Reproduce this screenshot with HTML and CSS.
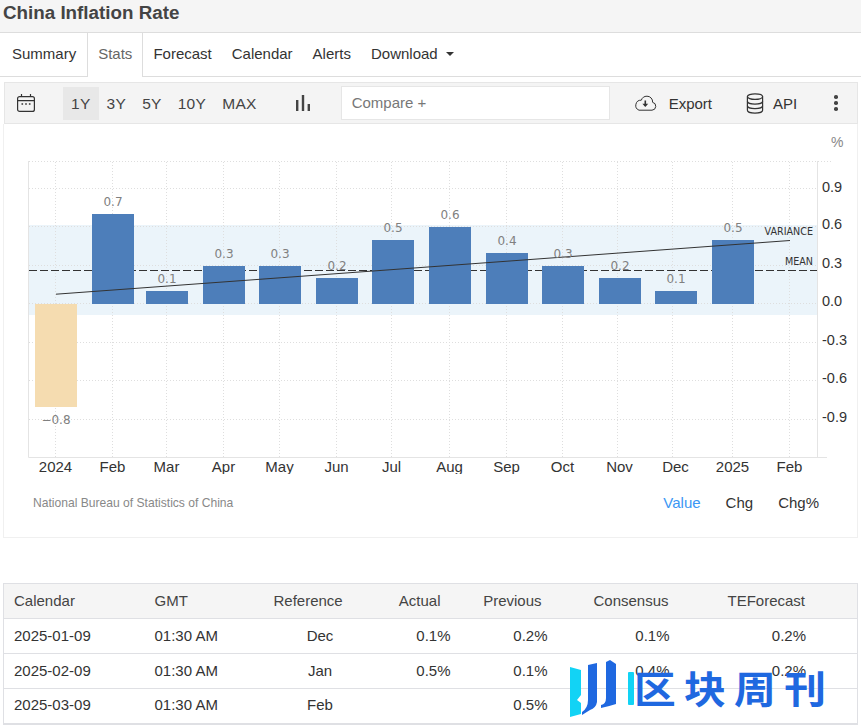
FILE: index.html
```html
<!DOCTYPE html>
<html lang="en">

<head>
    <meta charset="UTF-8">
    <meta name="viewport" content="width=device-width, initial-scale=1.0">
    <title>China Inflation Rate</title>
    <link rel="stylesheet" href="styles.css">
</head>

<body>

    <h1 class="page-title">China Inflation Rate</h1>

    <ul class="tabs">
        <li>Summary</li>
        <li class="active">Stats</li>
        <li>Forecast</li>
        <li>Calendar</li>
        <li>Alerts</li>
        <li>Download <span class="caret"></span></li>
    </ul>

    <div class="toolbar">
        <svg class="icon-calendar" width="20" height="20" viewBox="0 0 20 20" fill="none" stroke="#333" stroke-width="1.2">
            <rect x="1.6" y="3.6" width="16.8" height="14.8" rx="2" />
            <path d="M1.6 7.6h16.8M5.5 1v2.6M14.5 1v2.6" />
            <path d="M5.5 11h1.6M9.2 11h1.6M12.9 11h1.6" stroke-width="1.6" />
        </svg>
        <div class="ranges">
            <span class="range selected">1Y</span>
            <span class="range">3Y</span>
            <span class="range">5Y</span>
            <span class="range">10Y</span>
            <span class="range">MAX</span>
        </div>
        <svg class="icon-bars" width="16" height="16" viewBox="0 0 16 16" fill="#444">
            <rect x="1" y="5" width="2.4" height="11" />
            <rect x="6.8" y="0" width="2.4" height="16" />
            <rect x="12.6" y="9" width="2.4" height="7" />
        </svg>
        <div class="compare">Compare +</div>
        <svg class="icon-export" width="24" height="16" viewBox="0 0 24 16" fill="none" stroke="#333" stroke-width="1">
            <path d="M6 15.2H19a4 4 0 0 0 .6-7.9A5.6 5.6 0 0 0 14 1.2a6 6 0 0 0-5.7 4A5.2 5.2 0 0 0 6 15.2z" />
            <path d="M12.3 5.5v5.5" stroke-width="1.6" />
            <path d="M9.4 8.8h5.8l-2.9 3.2z" fill="#333" stroke="none" />
        </svg>
        <span class="tool-label export-label">Export</span>
        <svg class="icon-db" width="18" height="21" viewBox="0 0 18 21" fill="none" stroke="#333" stroke-width="1.2">
            <ellipse cx="9" cy="3.6" rx="7.6" ry="2.8" />
            <path d="M1.4 3.6v13.6c0 1.6 3.4 2.9 7.6 2.9s7.6-1.3 7.6-2.9V3.6" />
            <path d="M1.4 8.2c0 1.6 3.4 2.9 7.6 2.9s7.6-1.3 7.6-2.9M1.4 12.7c0 1.6 3.4 2.9 7.6 2.9s7.6-1.3 7.6-2.9" />
        </svg>
        <span class="tool-label">API</span>
        <div class="dots"><i></i><i></i><i></i></div>
    </div>

    <div class="chart-panel">
        <!-- viewBox is in page coordinates, the plot is a free canvas -->
        <svg class="chart" width="853" height="350" viewBox="4 124 853 350">
            <rect x="29" y="225" width="788" height="90" fill="#ebf4fa" />

            <g class="grid">
                <path d="M29 161.5H832M29 188.5H817M29 226.5H817M29 265.5H817M29 303.5H817M29 342.5H817M29 380.5H817M29 419.5H817" />
                <path d="M55.5 162V457M112.5 162V457M166.5 162V457M223.5 162V457M279.5 162V457M336.5 162V457M391.5 162V457M449.5 162V457M506.5 162V457M562.5 162V457M617.5 162V457M672.5 162V457M732.5 162V457M789.5 162V457" />
            </g>

            <path class="axis" d="M28.5 161V457.5H827M817.5 161V457.5" />

            <path class="mean" d="M29 270.5H817" />

            <rect class="bar-neg" x="35" y="304" width="42" height="103" />
            <rect class="bar" x="92" y="214" width="42" height="90" />
            <rect class="bar" x="146" y="291" width="42" height="13" />
            <rect class="bar" x="203" y="266" width="42" height="38" />
            <rect class="bar" x="259" y="266" width="42" height="38" />
            <rect class="bar" x="316" y="278" width="42" height="26" />
            <rect class="bar" x="372" y="240" width="42" height="64" />
            <rect class="bar" x="429" y="227" width="42" height="77" />
            <rect class="bar" x="486" y="253" width="42" height="51" />
            <rect class="bar" x="542" y="266" width="42" height="38" />
            <rect class="bar" x="599" y="278" width="42" height="26" />
            <rect class="bar" x="655" y="291" width="42" height="13" />
            <rect class="bar" x="712" y="240" width="42" height="64" />

            <path class="trend" d="M56 294.2L790 240.5" />

            <g class="bar-label">
                <text x="56" y="424">−0.8</text>
                <text x="113" y="206">0.7</text>
                <text x="167" y="283">0.1</text>
                <text x="224" y="258">0.3</text>
                <text x="280" y="258">0.3</text>
                <text x="337" y="270">0.2</text>
                <text x="393" y="232">0.5</text>
                <text x="450" y="219">0.6</text>
                <text x="507" y="245">0.4</text>
                <text x="563" y="258">0.3</text>
                <text x="620" y="270">0.2</text>
                <text x="676" y="283">0.1</text>
                <text x="733" y="232">0.5</text>
            </g>

            <g class="line-label">
                <text x="813" y="235">VARIANCE</text>
                <text x="813" y="265">MEAN</text>
            </g>

            <g class="y-label">
                <text x="822" y="192">0.9</text>
                <text x="822" y="229">0.6</text>
                <text x="822" y="268">0.3</text>
                <text x="822" y="306">0.0</text>
                <text x="822" y="345">-0.3</text>
                <text x="822" y="383">-0.6</text>
                <text x="822" y="422">-0.9</text>
            </g>
            <text class="unit" x="831" y="147">%</text>

            <g class="x-label">
                <text x="55.5" y="472">2024</text>
                <text x="112.5" y="472">Feb</text>
                <text x="166.5" y="472">Mar</text>
                <text x="223.5" y="472">Apr</text>
                <text x="279.5" y="472">May</text>
                <text x="336.5" y="472">Jun</text>
                <text x="391.5" y="472">Jul</text>
                <text x="449.5" y="472">Aug</text>
                <text x="506.5" y="472">Sep</text>
                <text x="562.5" y="472">Oct</text>
                <text x="619.5" y="472">Nov</text>
                <text x="675.5" y="472">Dec</text>
                <text x="732.5" y="472">2025</text>
                <text x="789.5" y="472">Feb</text>
            </g>
        </svg>
        <div class="chart-footer">
            <span class="source">National Bureau of Statistics of China</span>
            <div class="modes">
                <span class="mode current">Value</span>
                <span class="mode">Chg</span>
                <span class="mode">Chg%</span>
            </div>
        </div>
    </div>

    <table class="calendar">
        <thead>
            <tr>
                <th>Calendar</th>
                <th>GMT</th>
                <th>Reference</th>
                <th>Actual</th>
                <th>Previous</th>
                <th>Consensus</th>
                <th>TEForecast</th>
            </tr>
        </thead>
        <tbody>
            <tr>
                <td>2025-01-09</td>
                <td>01:30 AM</td>
                <td>Dec</td>
                <td>0.1%</td>
                <td>0.2%</td>
                <td>0.1%</td>
                <td>0.2%</td>
            </tr>
            <tr>
                <td>2025-02-09</td>
                <td>01:30 AM</td>
                <td>Jan</td>
                <td>0.5%</td>
                <td>0.1%</td>
                <td>0.4%</td>
                <td>0.2%</td>
            </tr>
            <tr>
                <td>2025-03-09</td>
                <td>01:30 AM</td>
                <td>Feb</td>
                <td></td>
                <td>0.5%</td>
                <td></td>
                <td></td>
            </tr>
        </tbody>
    </table>

    <div class="watermark">
        <svg class="watermark-logo" width="66" height="60" viewBox="0 0 66 60">
            <path fill="#12d3f5" d="M0 7L11 10V35L7 40L11 43V54L0 57Z" />
            <path fill="#1f68e0" d="M18 5L27 3V42Q26 48 20 50L12 55V52Q18 48 18 40Z" />
            <path fill="#1f68e0" d="M36 2L40 0L46 4V44Q40 46 31 48V45Q36 44 36 38Z" />
            <rect fill="#12d3f5" x="58" y="12" width="6" height="33" rx="1" />
        </svg>
        <span class="watermark-text">区块周刊</span>
    </div>

</body>

</html>
```

FILE: styles.css
```css
* {
    box-sizing: border-box;
}

body {
    position: relative;
    margin: 0;
    height: 726px;
    overflow: hidden;
    background: #ffffff;
    color: #333333;
    font-family: "Liberation Sans", Arial, sans-serif;
    font-size: 15px;
}

.page-title {
    margin: 0;
    height: 33px;
    padding: 2px 0 0 3px;
    background-color: #f5f5f5;
    border-bottom: 1px solid #dddddd;
    color: #444444;
    font-size: 18.8px;
    line-height: 21px;
}

.tabs {
    display: flex;
    margin: 0;
    padding: 0 0 0 2px;
    height: 44px;
    list-style: none;
    border-bottom: 1px solid #dddddd;
}

.tabs li {
    padding: 0 10px;
    line-height: 42px;
    height: 44px;
}

.tabs li:first-child {
    padding-right: 11px;
}

.tabs li.active {
    color: #666666;
    background-color: #ffffff;
    border-left: 1px solid #dddddd;
    border-right: 1px solid #dddddd;
}

.caret {
    display: inline-block;
    margin-left: 4px;
    vertical-align: 3px;
    border-top: 4px solid #333333;
    border-left: 4px solid transparent;
    border-right: 4px solid transparent;
}

.toolbar {
    display: flex;
    align-items: center;
    margin: 5px 3px 0 4px;
    height: 42px;
    background-color: #f4f4f4;
    border: 1px solid #e6e6e6;
}

.icon-calendar {
    margin-left: 11px;
}

.ranges {
    display: flex;
    margin-left: 27px;
}

.range {
    padding: 0 8px;
    height: 33px;
    line-height: 33px;
    font-size: 15.5px;
    letter-spacing: 0.3px;
    color: #444444;
}

.range.selected {
    background-color: #e8e8e8;
}

.icon-bars {
    margin-left: 30px;
}

.compare {
    margin-left: 30px;
    width: 269px;
    height: 34px;
    padding-left: 10px;
    line-height: 32px;
    color: #777777;
    background-color: #ffffff;
    border: 1px solid #e6e6e6;
}

.icon-export {
    margin-left: 23px;
}

.tool-label {
    margin-left: 9px;
}

.export-label {
    margin-left: 12px;
    margin-right: 34px;
}

.dots {
    display: flex;
    flex-direction: column;
    gap: 2.5px;
    margin-left: 37px;
}

.dots i {
    display: block;
    width: 3.5px;
    height: 3.5px;
    border-radius: 50%;
    background-color: #444444;
}

.chart-panel {
    margin-left: 3px;
    margin-right: 3px;
    height: 414px;
    border: 1px solid #f0f0f0;
    border-top: 0;
}

.chart {
    display: block;
}

.grid path {
    fill: none;
    stroke: #dedede;
    stroke-width: 1;
    stroke-dasharray: 1 2;
}

.axis {
    fill: none;
    stroke: #e4e4e4;
    stroke-width: 1;
}

.mean {
    fill: none;
    stroke: #333333;
    stroke-width: 1;
    stroke-dasharray: 8 3;
}

.bar {
    fill: #4d7eba;
}

.bar-neg {
    fill: #f5dcb0;
}

.trend {
    fill: none;
    stroke: #333333;
    stroke-width: 1;
}

.bar-label text {
    fill: #808080;
    font-family: "DejaVu Sans", sans-serif;
    font-size: 12px;
    text-anchor: middle;
}

.line-label text {
    fill: #333333;
    font-family: "DejaVu Sans", sans-serif;
    font-size: 9.6px;
    text-anchor: end;
}

.y-label text {
    fill: #333333;
    font-size: 14.5px;
}

.unit {
    fill: #888888;
    font-size: 14px;
}

.x-label text {
    fill: #333333;
    font-size: 15px;
    text-anchor: middle;
}

.chart-footer {
    display: flex;
    justify-content: space-between;
    align-items: center;
    padding: 20px 38px 0 29px;
}

.source {
    color: #888888;
    font-size: 12.1px;
}

.modes {
    display: flex;
    gap: 25px;
}

.mode {
    font-size: 15px;
}

.mode.current {
    color: #3b97f4;
}

.calendar {
    width: 855px;
    margin: 45px 0 0 3px;
    table-layout: fixed;
    border-collapse: collapse;
    border: 1px solid #dfe0e4;
    border-bottom-width: 2px;
}

.calendar th,
.calendar td {
    height: 35px;
    padding: 0 10px 2px;
    font-weight: normal;
    text-align: right;
    border-bottom: 1px solid #dfe0e4;
}

.calendar th {
    color: #444444;
    background-color: #f5f5f5;
}

.calendar th:nth-child(1),
.calendar td:nth-child(1) {
    width: 141px;
    text-align: left;
}

.calendar th:nth-child(2),
.calendar td:nth-child(2) {
    width: 119px;
    text-align: left;
}

.calendar th:nth-child(3) {
    width: 110px;
    text-align: left;
}

.calendar td:nth-child(3) {
    padding-left: 13px;
    text-align: center;
}

.calendar th:nth-child(4) {
    width: 87px;
    padding-right: 20px;
}

.calendar th:nth-child(5) {
    width: 97px;
    padding-right: 16px;
}

.calendar th:nth-child(6) {
    width: 122px;
    padding-right: 11px;
}

.calendar th:nth-child(7) {
    padding-right: 52px;
}

.calendar td:nth-child(7) {
    padding-right: 51px;
}

.watermark {
    position: absolute;
    left: 570px;
    top: 660px;
    display: flex;
    align-items: flex-start;
}

.watermark-text {
    margin: 4px 0 0 -2px;
    color: #1f68e0;
    font-family: "Noto Sans CJK SC", sans-serif;
    font-size: 38px;
    font-weight: 700;
    line-height: 46px;
    letter-spacing: 7.5px;
    transform: scaleX(1.1);
    transform-origin: left center;
}
```
